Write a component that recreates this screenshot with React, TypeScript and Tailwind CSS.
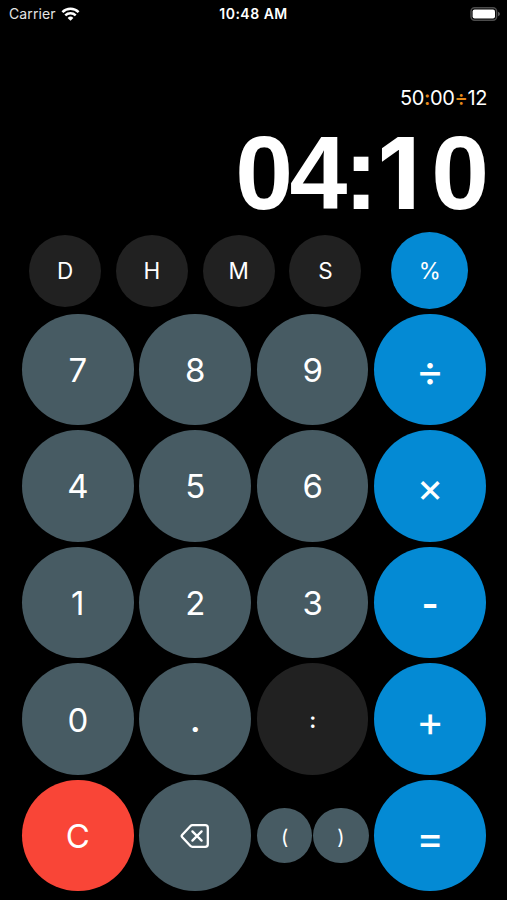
import type { ReactNode } from "react";

type KeyDef = {
  label: string;
  tone: string;
  text?: string;
};

const SLATE = "bg-[#475b63]";
const DARK = "bg-[#212121]";
const BLUE = "bg-[#048ad4]";
const RED = "bg-[#f94537]";

const DIGIT = "text-[33px] pt-[2px]";
const OPERATOR = "text-[42px] pt-[4px]";

const UNITS = ["D", "H", "M", "S"];

const ROWS: KeyDef[][] = [
  [
    { label: "7", tone: SLATE },
    { label: "8", tone: SLATE },
    { label: "9", tone: SLATE },
    { label: "÷", tone: BLUE, text: "text-[43px] pt-[2px]" },
  ],
  [
    { label: "4", tone: SLATE },
    { label: "5", tone: SLATE },
    { label: "6", tone: SLATE },
    { label: "×", tone: BLUE, text: "text-[41px] pt-[4px]" },
  ],
  [
    { label: "1", tone: SLATE },
    { label: "2", tone: SLATE },
    { label: "3", tone: SLATE },
    { label: "-", tone: BLUE, text: "text-[37px] font-semibold pt-[3px]" },
  ],
  [
    { label: "0", tone: SLATE },
    { label: ".", tone: SLATE, text: "text-[33px] font-semibold pt-[2px]" },
    { label: ":", tone: DARK, text: "text-[22px] font-semibold pt-[2px]" },
    { label: "+", tone: BLUE, text: OPERATOR },
  ],
];

function Key({
  tone,
  size = "size-[111.6px]",
  text = DIGIT,
  children,
}: {
  tone: string;
  size?: string;
  text?: string;
  children: ReactNode;
}) {
  return (
    <button className={`flex shrink-0 items-center justify-center rounded-full leading-none ${size} ${tone} ${text}`}>
      {children}
    </button>
  );
}

function WifiIcon() {
  return (
    <svg width="19" height="14" viewBox="0 0 18 14" fill="none" stroke="white" strokeWidth="2.5">
      <path d="M0.9 5.1a11.6 11.6 0 0 1 16.2 0" />
      <path d="M3.8 8.3a7.4 7.4 0 0 1 10.4 0" />
      <path d="M9 13.8 6.1 10.9a4.1 4.1 0 0 1 5.8 0Z" fill="white" stroke="none" />
    </svg>
  );
}

function BatteryIcon() {
  return (
    <svg width="31" height="14" viewBox="0 0 31 14">
      <rect x="1" y="0.8" width="25.6" height="12.4" rx="3.6" fill="none" stroke="#4c4c4c" strokeWidth="1.5" />
      <rect x="2.6" y="2.6" width="22.4" height="8.8" rx="2" fill="white" />
      <path d="M28 4.8c1.3.5 1.9 1.3 1.9 2.2s-.6 1.7-1.9 2.2Z" fill="#5a5a5a" />
    </svg>
  );
}

function BackspaceIcon() {
  return (
    <svg
      width="30"
      height="26"
      viewBox="0 0 30 26"
      fill="none"
      stroke="white"
      strokeWidth="2.3"
      strokeLinecap="round"
      strokeLinejoin="round"
    >
      <path d="M12.4 2.2H25.2a2.6 2.6 0 0 1 2.6 2.6V21.2a2.6 2.6 0 0 1-2.6 2.6H12.4a2.6 2.6 0 0 1-1.9-.8L2.3 14.3a1.9 1.9 0 0 1 0-2.6L10.5 3a2.6 2.6 0 0 1 1.9-.8Z" />
      <path d="m12.4 8.4 9.2 9.2m0-9.2-9.2 9.2" />
    </svg>
  );
}

export default function App() {
  return (
    <div className="flex h-[900px] w-[507px] flex-col overflow-hidden bg-black font-['Inter',sans-serif] text-white">
      {/* Status bar */}
      <div className="grid h-7 grid-cols-[1fr_auto_1fr] items-center pl-[9px] pr-[6px] text-[14px] leading-none">
        <div className="flex items-center gap-[5px] tracking-[0.1px] text-[#e4e4e4]">
          <span>Carrier</span>
          <WifiIcon />
        </div>
        <div className="-ml-[3px] text-center font-semibold tracking-[0.5px]">10:48 AM</div>
        <div className="flex justify-end">
          <BatteryIcon />
        </div>
      </div>

      {/* Display */}
      <div className="flex h-[204px] flex-col items-end pr-5 pt-[58px]">
        <div className="text-[20px] leading-6 tracking-[-0.4px]">
          50<span className="font-semibold text-[#e58a1a]">:</span>00
          <span className="font-medium text-[#e58a1a]">÷</span>12
        </div>
        <div className="mt-[11px] flex items-baseline font-['Liberation_Sans',sans-serif] text-[104px] font-bold leading-[104px]">
          <span className="tracking-[-3.5px]">04</span>
          <span className="tracking-[-1px]">:</span>
          <span className="mr-[11px] font-['Inter',sans-serif] text-[99px] leading-[104px]">1</span>
          <span className="-mr-[2px]">0</span>
        </div>
      </div>

      {/* Time units and percent */}
      <div className="flex h-[77px] items-center pl-[29px]">
        <div className="flex gap-[14.8px]">
          {UNITS.map((unit) => (
            <Key key={unit} tone={DARK} size="size-[72px]" text="text-[22.5px] pt-[1px]">
              {unit}
            </Key>
          ))}
        </div>
        <div className="ml-[30px]">
          <Key tone={BLUE} size="size-[77px]" text="text-[22.5px] pt-[1px]">
            %
          </Key>
        </div>
      </div>

      {/* Keypad */}
      <div className="ml-[22px] mt-[4.5px] grid w-[464px] grid-cols-4 gap-x-[5.7px] gap-y-[5px]">
        {ROWS.flat().map((key) => (
          <Key key={key.label} tone={key.tone} text={key.text}>
            {key.label}
          </Key>
        ))}
        <Key tone={RED}>C</Key>
        <Key tone={SLATE} text="">
          <BackspaceIcon />
        </Key>
        <div className="flex items-center justify-between">
          <Key tone={SLATE} size="size-[55.5px]" text="text-[20px] pt-[2px]">
            (
          </Key>
          <Key tone={SLATE} size="size-[55.5px]" text="text-[20px] pt-[2px]">
            )
          </Key>
        </div>
        <Key tone={BLUE} text={OPERATOR}>
          =
        </Key>
      </div>
    </div>
  );
}
